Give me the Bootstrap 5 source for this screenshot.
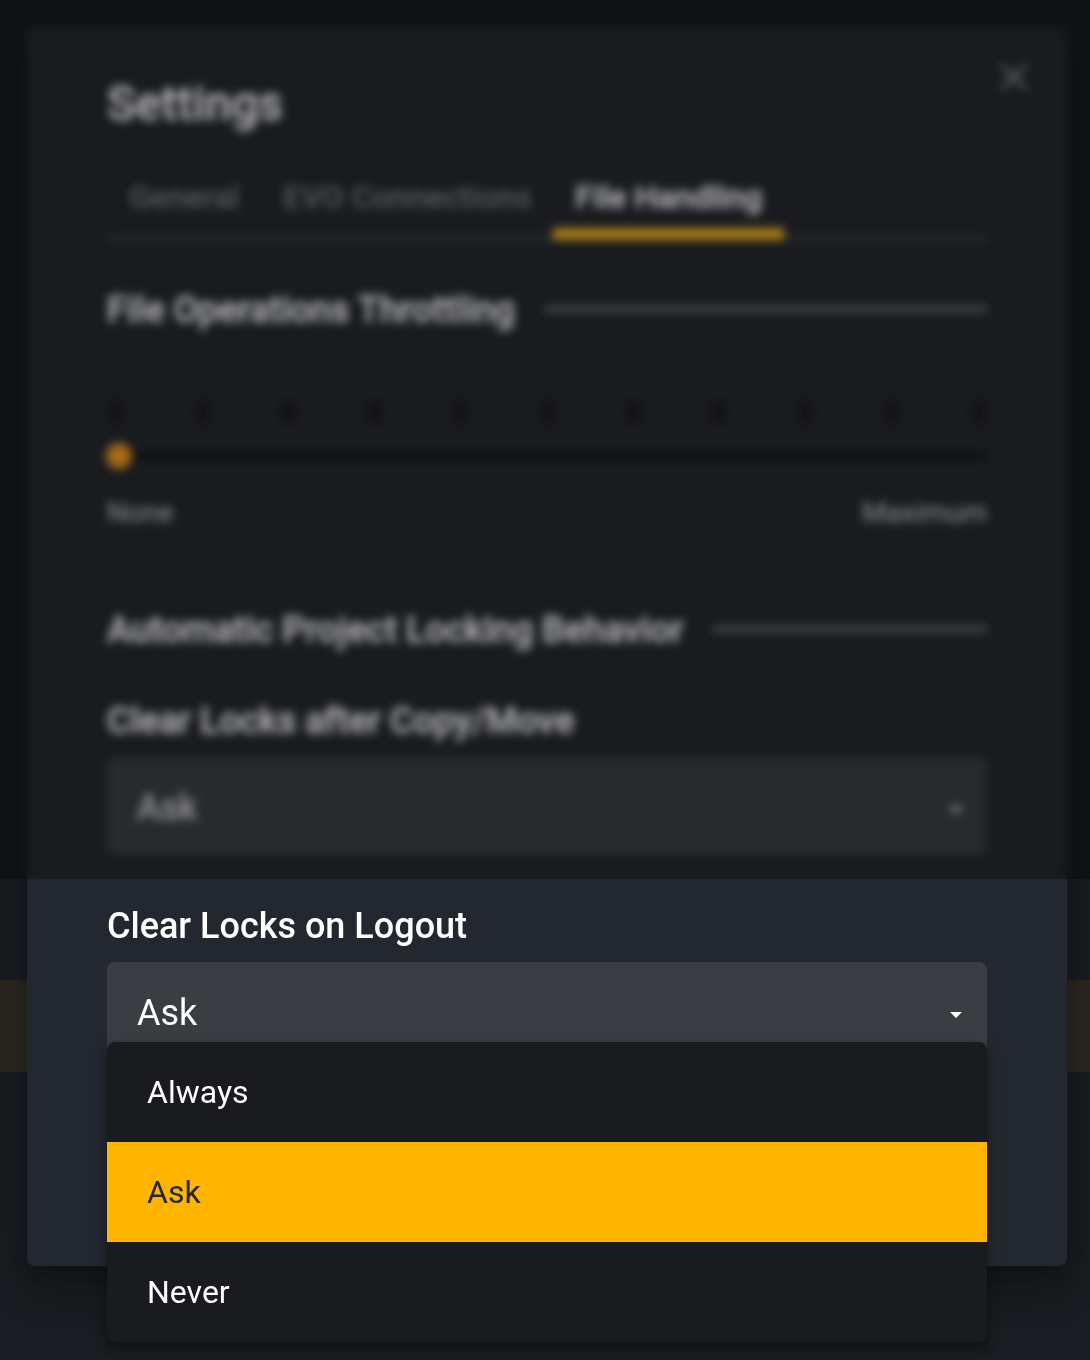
<!DOCTYPE html>
<html lang="en">
<head>
<meta charset="utf-8">
<title>Settings</title>
<link href="https://cdn.jsdelivr.net/npm/bootstrap@5.3.0/dist/css/bootstrap.min.css" rel="stylesheet">
<style>
html,body{margin:0;background:#191c20;font-family:Roboto,"Liberation Sans",sans-serif;color:#fff}
.stage{display:grid;width:1090px;height:1360px;overflow:hidden;position:relative}
.stage>.layer-back,.stage>.sheet{grid-area:1/1}
.layer-back{display:flex;flex-direction:column;padding-top:980px}
.warn-band{height:92px;background:#2b2720}
.sheet{margin:27px 23px 94px 27px;background:#23272f;border-radius:8px;padding:37px 80px 0;box-shadow:0 11px 15px -7px rgba(0,0,0,.2),0 24px 38px 3px rgba(0,0,0,.14),0 9px 46px 8px rgba(0,0,0,.12);height:1239px;position:relative}
.sheet-title{font-size:47.5px;font-weight:500;line-height:80px;margin:0;-webkit-text-stroke:.5px #fff}
.sheet-close{position:absolute;top:34px;right:37px;width:32px;height:32px;color:#8b8d92}
.tab-strip{margin-top:21px;border-bottom:5px solid #3a3e46;height:76px;--bs-nav-link-padding-x:22px;--bs-nav-link-padding-y:0}
.tab-strip .nav-link{font-size:32px;font-weight:500;color:#80848c;line-height:64px;height:75px;border-bottom:12px solid transparent}
.tab-strip .nav-link.active{color:#fff;border-bottom-color:#ffb400;-webkit-text-stroke:.5px #fff}
.sec-head{display:flex;align-items:center;gap:30px;font-size:36px;font-weight:500;line-height:50px;margin:0;-webkit-text-stroke:.5px #fff}
.sec-head::after{content:"";flex:1;height:6px;background:#666a72;margin-bottom:3px}
.ticks{display:flex;justify-content:space-between;padding:0 3px;margin-top:65px}
.ticks i{display:block;width:12px;height:24px;border-radius:6px;background:#1a1b20}
.rail{height:6px;background:#121316;margin-top:29px;position:relative;border-radius:3px}
.rail-knob{position:absolute;left:-1px;top:-10px;width:26px;height:26px;border-radius:50%;background:#ff9800}
.rail-ends{display:flex;justify-content:space-between;font-size:28px;line-height:36px;color:#d0d2d6;margin-top:36px}
.field-label{font-size:36px;font-weight:500;line-height:48px;margin:0 0 12px}
.field-label.is-veiled{-webkit-text-stroke:.5px #fff}
.pick{height:98px;background:#3a3d42;border-radius:8px;padding:0 25px 0 30px;font-size:36px;line-height:1;display:flex;align-items:center;justify-content:space-between;position:relative}
.pick span{margin-top:4px}
.pick svg{width:12px;height:6px;flex:none;margin-top:7px}
.pick-wrap{position:relative}
.pick-menu.dropdown-menu{--bs-dropdown-bg:#191b1f;--bs-dropdown-border-width:0;--bs-dropdown-padding-y:0;--bs-dropdown-border-radius:8px;--bs-dropdown-item-padding-x:40px;--bs-dropdown-item-padding-y:0;--bs-dropdown-link-color:#fff;--bs-dropdown-link-hover-color:#fff;--bs-dropdown-link-hover-bg:transparent;--bs-dropdown-link-active-bg:#ffb400;--bs-dropdown-link-active-color:#23272f;position:absolute;display:block;top:80px;left:0;right:0;width:100%;overflow:hidden;box-shadow:0 5px 5px -3px rgba(0,0,0,.2),0 8px 10px 1px rgba(0,0,0,.14),0 3px 14px 2px rgba(0,0,0,.12);z-index:3}
.pick-menu .dropdown-item{height:100px;line-height:100px;font-size:32px}
.blur-veil{position:absolute;left:0;top:0;right:0;height:879px;background:rgba(0,0,0,.3);-webkit-backdrop-filter:blur(5px) saturate(.8);backdrop-filter:blur(5px) saturate(.8);z-index:2}
.gap-a{height:44px}.gap-b{height:74px}.gap-c{height:42px}.gap-d{height:47px}
</style>
</head>
<body>
<div class="stage">
  <div class="layer-back"><div class="warn-band"></div></div>
  <section class="sheet">
    <h1 class="sheet-title">Settings</h1>
    <svg class="sheet-close" viewBox="0 0 32 32" fill="none" stroke="currentColor" stroke-width="3.5"><path d="M4 4 28 28M28 4 4 28"/></svg>
    <ul class="nav tab-strip">
      <li class="nav-item"><a class="nav-link" href="#">General</a></li>
      <li class="nav-item"><a class="nav-link" href="#">EVO Connections</a></li>
      <li class="nav-item"><a class="nav-link active" href="#">File Handling</a></li>
    </ul>
    <div class="gap-a"></div>
    <h2 class="sec-head">File Operations Throttling</h2>
    <div class="ticks"><i></i><i></i><i></i><i></i><i></i><i></i><i></i><i></i><i></i><i></i><i></i></div>
    <div class="rail"><span class="rail-knob"></span></div>
    <div class="rail-ends"><span>None</span><span>Maximum</span></div>
    <div class="gap-b"></div>
    <h2 class="sec-head">Automatic Project Locking Behavior</h2>
    <div class="gap-c"></div>
    <p class="field-label is-veiled">Clear Locks after Copy/Move</p>
    <div class="pick"><span>Ask</span><svg viewBox="0 0 14 7" fill="#fff"><path d="M0 0h14L7 7z"/></svg></div>
    <div class="gap-d"></div>
    <p class="field-label">Clear Locks on Logout</p>
    <div class="pick-wrap">
      <div class="pick"><span>Ask</span><svg viewBox="0 0 14 7" fill="#fff"><path d="M0 0h14L7 7z"/></svg></div>
      <ul class="dropdown-menu pick-menu">
        <li><a class="dropdown-item" href="#">Always</a></li>
        <li><a class="dropdown-item active" href="#">Ask</a></li>
        <li><a class="dropdown-item" href="#">Never</a></li>
      </ul>
    </div>
  </section>
  <div class="blur-veil"></div>
</div>
<script src="https://cdn.jsdelivr.net/npm/bootstrap@5.3.0/dist/js/bootstrap.bundle.min.js"></script>
</body>
</html>
